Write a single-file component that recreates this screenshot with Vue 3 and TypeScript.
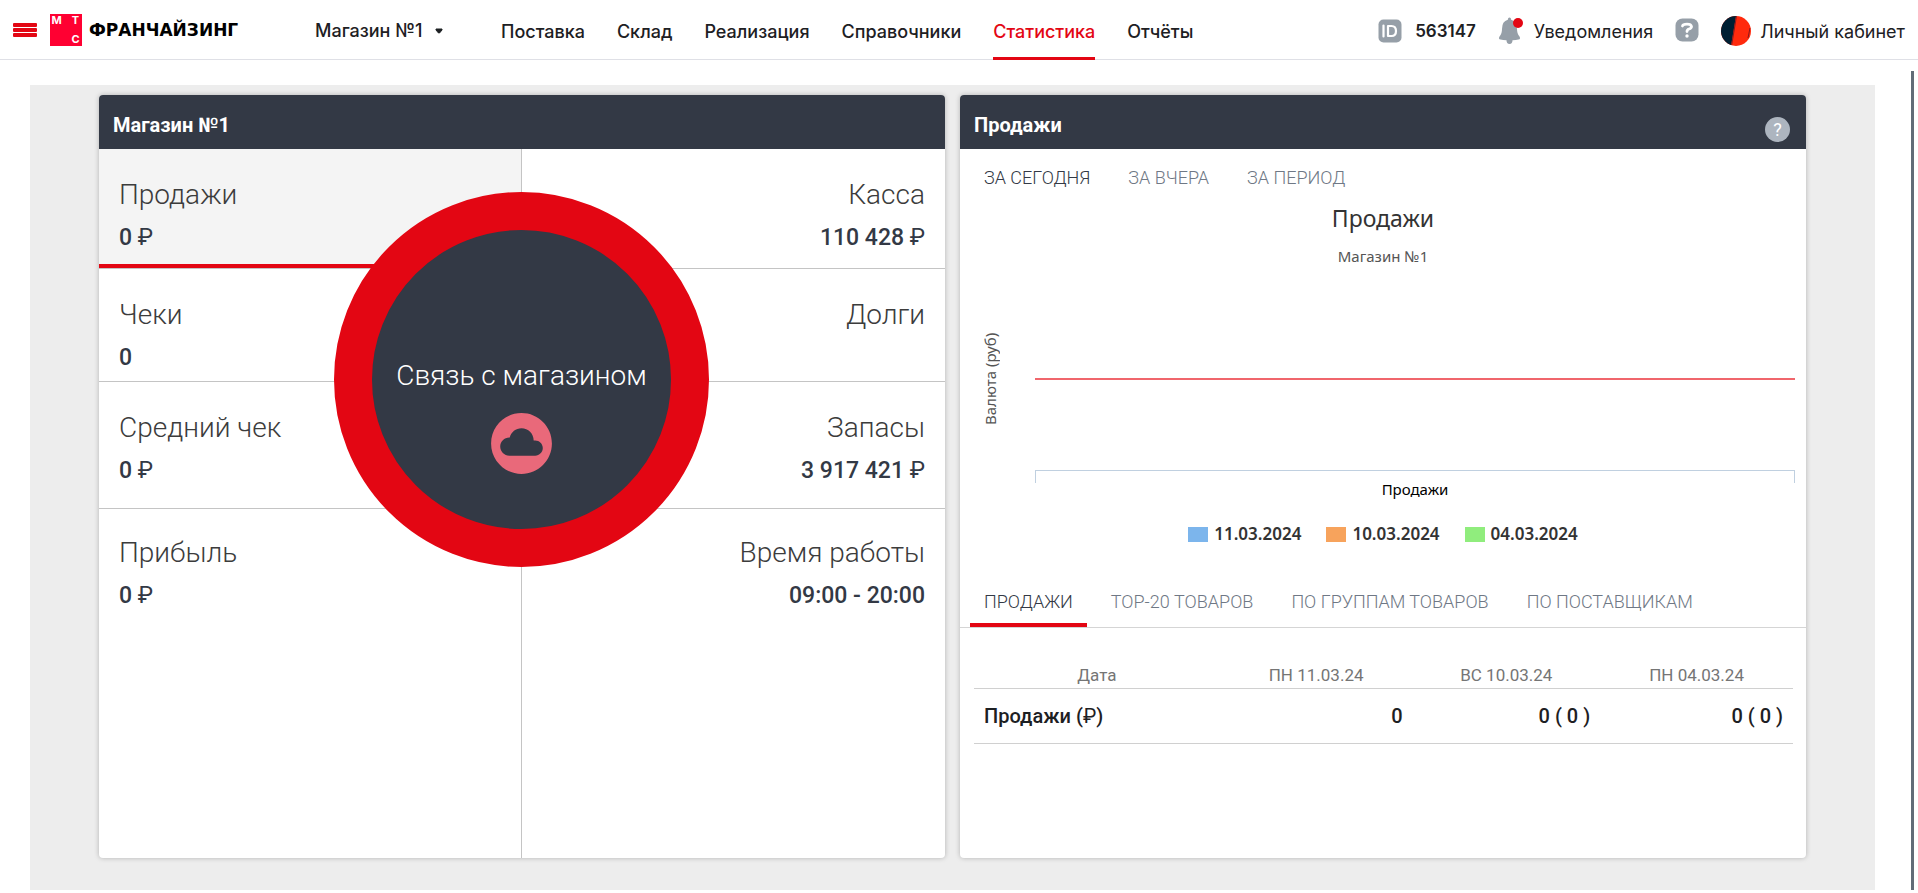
<script setup lang="ts">
import { ref } from 'vue'

interface Metric {
  title: string
  value: string
  rub: boolean
}

const menu: string[] = ['Поставка', 'Склад', 'Реализация', 'Справочники', 'Статистика', 'Отчёты']
const activeMenu = ref('Статистика')
const shop = ref('Магазин №1')

const metrics: Metric[] = [
  { title: 'Продажи', value: '0', rub: true },
  { title: 'Касса', value: '110 428', rub: true },
  { title: 'Чеки', value: '0', rub: false },
  { title: 'Долги', value: '', rub: false },
  { title: 'Средний чек', value: '0', rub: true },
  { title: 'Запасы', value: '3 917 421', rub: true },
  { title: 'Прибыль', value: '0', rub: true },
  { title: 'Время работы', value: '09:00 - 20:00', rub: false },
]
const activeMetric = ref('Продажи')

const periods: string[] = ['ЗА СЕГОДНЯ', 'ЗА ВЧЕРА', 'ЗА ПЕРИОД']
const activePeriod = ref('ЗА СЕГОДНЯ')

const reports: string[] = ['ПРОДАЖИ', 'TOP-20 ТОВАРОВ', 'ПО ГРУППАМ ТОВАРОВ', 'ПО ПОСТАВЩИКАМ']
const activeReport = ref('ПРОДАЖИ')

const legend = [
  { label: '11.03.2024', tone: 'blue' },
  { label: '10.03.2024', tone: 'orange' },
  { label: '04.03.2024', tone: 'green' },
]
</script>

<template>
  <div class="page">
    <header class="topbar">
      <button class="burger" type="button" aria-label="Меню">
        <span></span><span></span><span></span>
      </button>
      <a class="brand" href="#">
        <span class="logo"><b>М</b><b>Т</b><b></b><b>С</b></span>
        <span class="brand-name">ФРАНЧАЙЗИНГ</span>
      </a>
      <label class="shop">
        <select v-model="shop" aria-label="Магазин">
          <option>Магазин №1</option>
        </select>
        <svg width="8" height="6" viewBox="0 0 8 6" aria-hidden="true">
          <path d="M1 1h6v1L4.500 5h-1L1 2z" fill="#1d2023" stroke="#1d2023" stroke-linejoin="round" />
        </svg>
      </label>
      <nav class="menu">
        <a
          v-for="item in menu"
          :key="item"
          href="#"
          :class="{ active: item === activeMenu }"
          @click.prevent="activeMenu = item"
        >{{ item }}</a>
      </nav>
      <div class="account">
        <svg class="id-icon" width="24" height="24" viewBox="0 0 24 24" aria-hidden="true">
          <rect x="0.500" y="0.500" width="23" height="23" rx="5" fill="#969fa8" />
          <path d="M5.500 6.500v11M10 7h3.500q4.500 0 4.500 5t-4.500 5h-3.500z" fill="none" stroke="#fff" stroke-width="2.200" stroke-linecap="round" stroke-linejoin="round" />
        </svg>
        <strong class="id-number">563147</strong>
        <a class="notice" href="#">
          <svg width="26" height="28" viewBox="0 0 26 28" aria-hidden="true">
            <path d="M11.500 0.500q1.500 0 1.700 2.300q5.800 1.500 5.800 9.200q0 5 2.500 7.500q1.500 2.500-1 3q-2.500.500-6 .800q0 3.700-3 3.700t-3-3.700q-3.500-.300-6-.800q-2.500-.500-1-3q2.500-2.500 2.500-7.500q0-7.700 5.800-9.200q.200-2.300 1.700-2.300z" fill="#969fa8" />
            <circle cx="20" cy="6" r="5" fill="#e30613" />
          </svg>
          <span>Уведомления</span>
        </a>
        <a class="help" href="#" aria-label="Помощь">
          <svg width="24" height="24" viewBox="0 0 24 24" aria-hidden="true">
            <rect x="0.500" y="0.500" width="23" height="23" rx="7" fill="#969fa8" />
            <path d="M7.500 8q.500-1.800 4.500-1.800t4.500 2.300q0 1.700-2.500 2.500q-2 .700-2 2.500" fill="none" stroke="#fff" stroke-width="2.800" stroke-linecap="round" />
            <circle cx="12" cy="18" r="1.700" fill="#fff" />
          </svg>
        </a>
        <a class="profile" href="#">
          <svg width="30" height="30" viewBox="0 0 30 30" aria-hidden="true">
            <clipPath id="avatar"><circle cx="15" cy="15" r="15" /></clipPath>
            <g clip-path="url(#avatar)">
              <rect width="30" height="30" fill="#ff2a0d" />
              <path d="M0 0H15L10 30H0z" fill="#001f33" />
              <path d="M15.500 0L10.500 30M29 12l-2 10" stroke="#8a1a1c" fill="none" />
            </g>
          </svg>
          <span>Личный кабинет</span>
        </a>
      </div>
    </header>

    <div class="workspace">
      <main class="board">
        <section class="panel">
          <h2 class="panel-head">Магазин №1</h2>
          <div class="metrics">
            <button
              v-for="m in metrics"
              :key="m.title"
              type="button"
              class="metric"
              :class="{ active: m.title === activeMetric }"
              @click="activeMetric = m.title"
            >
              <span class="metric-title">{{ m.title }}</span>
              <span class="metric-value">{{ m.value }}<span v-if="m.rub" class="rub"> ₽</span></span>
            </button>
            <button class="link-circle" type="button">
              <span>Связь с магазином</span>
              <svg width="73" height="73" viewBox="0 0 24 24" aria-hidden="true">
                <path d="M12 2C6.480 2 2 6.480 2 12s4.480 10 10 10 10-4.480 10-10S17.520 2 12 2zm4.500 14H8c-1.660 0-3-1.340-3-3s1.340-3 3-3l.140.010C8.580 8.280 10.130 7 12 7c2.210 0 4 1.790 4 4h.500c1.380 0 2.500 1.120 2.500 2.500S17.880 16 16.500 16z" fill="#e9697a" />
              </svg>
            </button>
          </div>
        </section>

        <section class="panel">
          <h2 class="panel-head">
            Продажи
            <button class="hint" type="button" aria-label="Справка">?</button>
          </h2>
          <div class="tabs periods">
            <button
              v-for="p in periods"
              :key="p"
              type="button"
              :class="{ active: p === activePeriod }"
              @click="activePeriod = p"
            >{{ p }}</button>
          </div>
          <figure class="chart">
            <figcaption>
              <span class="chart-title">Продажи</span>
              <span class="chart-sub">Магазин №1</span>
            </figcaption>
            <div class="plot-row">
              <span class="y-title">Валюта (руб)</span>
              <div class="plot">
                <div class="series"></div>
                <div class="axis"></div>
              </div>
            </div>
            <div class="x-label">Продажи</div>
            <ul class="legend">
              <li v-for="l in legend" :key="l.label"><i :class="l.tone"></i>{{ l.label }}</li>
            </ul>
          </figure>
          <div class="tabs reports">
            <button
              v-for="r in reports"
              :key="r"
              type="button"
              :class="{ active: r === activeReport }"
              @click="activeReport = r"
            >{{ r }}</button>
          </div>
          <table class="sales">
            <thead>
              <tr><th>Дата</th><th>ПН 11.03.24</th><th>ВС 10.03.24</th><th>ПН 04.03.24</th></tr>
            </thead>
            <tbody>
              <tr><td>Продажи (<span class="rub">₽</span>)</td><td>0</td><td>0 ( 0 )</td><td>0 ( 0 )</td></tr>
            </tbody>
          </table>
        </section>
      </main>
      <div class="scroll-thumb"></div>
    </div>
  </div>
</template>

<style>
body {
  margin: 0;
  background: #fff;
}
</style>

<style scoped>
.page {
  display: flex;
  flex-direction: column;
  min-height: 100vh;
  box-sizing: border-box;
  padding-bottom: 3px;
  font-family: Roboto, "Liberation Sans", sans-serif;
  color: #1d2023;
}
button {
  font: inherit;
  color: inherit;
  background: none;
  border: 0;
  padding: 0;
  margin: 0;
  cursor: pointer;
}
a {
  color: inherit;
  text-decoration: none;
}
svg {
  display: block;
  flex: none;
}

.topbar {
  display: flex;
  align-items: center;
  height: 59px;
  padding: 0 13px;
  border-bottom: 1px solid #dfe0e6;
  font-family: Inter, "Liberation Sans", sans-serif;
  font-size: 18px;
  white-space: nowrap;
}
.burger {
  display: flex;
  flex-direction: column;
  gap: 1px;
  width: 24px;
}
.burger span {
  height: 4px;
  border-radius: 1px;
  background: #e30613;
}
.brand {
  display: flex;
  align-items: center;
  gap: 7px;
  margin-left: 13px;
  width: 265px;
}
.logo {
  display: grid;
  grid-template-columns: 1fr 1fr;
  justify-items: center;
  gap: 6px;
  width: 32px;
  height: 32px;
  background: #ff0032;
  color: #fff;
  font-size: 11px;
  line-height: 13px;
}
.logo b {
  font-weight: 700;
}
.brand-name {
  font: 700 17px/24px "DejaVu Sans", sans-serif;
  color: #000;
}
.shop {
  display: flex;
  align-items: center;
  gap: 12px;
  width: 132px;
  padding-top: 2px;
  font-weight: 500;
}
.shop select {
  appearance: none;
  border: 0;
  padding: 0;
  background: none;
  font: inherit;
  color: inherit;
}
.menu {
  display: flex;
  gap: 32px;
  height: 60px;
  margin-left: 54px;
  font-weight: 500;
}
.menu a {
  display: flex;
  align-items: center;
  padding: 6px 0 0;
  border-bottom: 3px solid transparent;
}
.menu a.active {
  color: #e30613;
  border-color: #e30613;
}
.account {
  display: flex;
  align-items: center;
  margin-left: auto;
  padding-top: 3px;
}
.id-number {
  margin-left: 13px;
  font-size: 17px;
  font-weight: 600;
}
.notice {
  display: flex;
  align-items: center;
  gap: 10px;
  margin-left: 22px;
}
.help {
  margin-left: 22px;
}
.help svg {
  margin-bottom: 2px;
}
.profile {
  display: flex;
  align-items: center;
  gap: 9px;
  margin-left: 22px;
}

.workspace {
  display: flex;
  flex: 1;
  padding: 11px 4px 0 30px;
}
.board {
  flex: 1;
  display: grid;
  grid-template-columns: minmax(0, 1fr) minmax(0, 1fr);
  gap: 15px;
  margin-top: 14px;
  padding: 10px 69px 32px;
  background: #ededed;
}
.scroll-thumb {
  width: 3px;
  margin-left: 36px;
  background: #626c77;
}
.panel {
  display: flex;
  flex-direction: column;
  background: #fff;
  border-radius: 4px;
  box-shadow: 0 0 5px rgba(0, 0, 0, 0.25);
}
.panel-head {
  display: flex;
  align-items: center;
  justify-content: space-between;
  height: 54px;
  box-sizing: border-box;
  margin: 0;
  padding: 6px 16px 0 14px;
  border-radius: 4px 4px 0 0;
  background: #333945;
  color: #fff;
  font-size: 20px;
  font-weight: 700;
}
.hint {
  width: 25px;
  height: 25px;
  margin-top: 8px;
  border-radius: 50%;
  background: #adb5bf;
  color: #fff;
  font-size: 18px;
  font-weight: 400;
  line-height: 25px;
}

.metrics {
  position: relative;
  flex: 1;
  display: grid;
  grid-template-columns: 1fr 1fr;
  grid-template-rows: 120px 113px 127px 1fr;
}
.metric {
  display: flex;
  flex-direction: column;
  gap: 11px;
  box-sizing: border-box;
  padding: 28px 20px 0;
  border-bottom: 1px solid #c4c4c4;
  text-align: left;
}
.metric:nth-child(odd) {
  border-right: 1px solid #c4c4c4;
}
.metric:nth-child(even) {
  text-align: right;
}
.metric:nth-child(7),
.metric:nth-child(8) {
  padding-top: 26px;
  border-bottom: 0;
}
.metric.active {
  background: #f4f4f4;
  box-shadow: inset 0 -4px 0 #e30613;
}
.metric-title {
  align-self: stretch;
  font-size: 28px;
  font-weight: 300;
  line-height: 36px;
  color: #3c3c3c;
}
.metric-value {
  align-self: stretch;
  font-size: 23px;
  font-weight: 500;
  line-height: 28px;
  color: #333945;
}
.rub {
  font-weight: 400;
}
.link-circle {
  position: absolute;
  top: 43px;
  left: 50%;
  width: 375px;
  height: 375px;
  margin-left: -188px;
  box-sizing: border-box;
  display: flex;
  flex-direction: column;
  align-items: center;
  gap: 13px;
  padding-top: 128px;
  border: 38px solid #e30613;
  border-radius: 50%;
  background: #333945;
  color: #fff;
  font-size: 28px;
  font-weight: 300;
  line-height: 36px;
  white-space: nowrap;
}

.tabs {
  display: flex;
  gap: 10px;
  padding: 0 10px;
  font-size: 18px;
  font-weight: 300;
  color: #6f7885;
}
.tabs button {
  padding: 0 14px;
  line-height: 28px;
}
.tabs .active {
  color: #333945;
}
.periods {
  padding-top: 15px;
}
.chart {
  margin: 0;
  font-family: "Noto Sans", sans-serif;
  font-size: 15px;
  line-height: 20px;
}
.chart figcaption {
  display: flex;
  flex-direction: column;
  align-items: center;
  gap: 13px;
  padding-top: 11px;
}
.chart-title {
  font-size: 23px;
  line-height: 30px;
  color: #333;
}
.chart-sub {
  color: #555;
}
.plot-row {
  display: flex;
  gap: 37px;
  height: 204px;
  margin-top: 13px;
  padding: 0 11px 0 20px;
}
.y-title {
  writing-mode: vertical-rl;
  transform: rotate(180deg);
  width: 18px;
  margin-bottom: 4px;
  text-align: center;
  color: #555;
}
.plot {
  flex: 1;
  display: flex;
  flex-direction: column;
  justify-content: space-between;
}
.series {
  height: 2px;
  margin-top: 99px;
  background: #f0666c;
}
.axis {
  height: 12px;
  border: 1px solid #c0d0e0;
  border-bottom: 0;
}
.x-label {
  margin-top: -4px;
  margin-left: 64px;
  text-align: center;
  color: #000;
}
.legend {
  display: flex;
  justify-content: center;
  gap: 25px;
  margin: 25px 0 0;
  padding: 0;
  list-style: none;
  font-size: 17px;
  font-weight: 600;
  color: #333;
}
.legend li {
  display: flex;
  align-items: center;
  gap: 6px;
}
.legend i {
  width: 20px;
  height: 15px;
}
.blue {
  background: #7cb5ec;
}
.orange {
  background: #f7a35c;
}
.green {
  background: #90ed7d;
}
.reports {
  margin-top: 44px;
  border-bottom: 1px solid #d5d5d5;
}
.reports button {
  padding-bottom: 7px;
  border-bottom: 4px solid transparent;
}
.reports .active {
  border-color: #e30613;
}

.sales {
  table-layout: fixed;
  border-collapse: collapse;
  margin: 32px 13px 0 14px;
}
.sales th {
  height: 26px;
  padding: 2px 0 0;
  border-bottom: 1px solid #d0d0d0;
  font-size: 17px;
  font-weight: 400;
  color: #757575;
}
.sales th:first-child {
  width: 30%;
}
.sales td {
  height: 54px;
  padding: 0 10px;
  border-bottom: 1px solid #d0d0d0;
  font-size: 20px;
  font-weight: 500;
  text-align: right;
}
.sales td:first-child {
  text-align: left;
}
</style>
